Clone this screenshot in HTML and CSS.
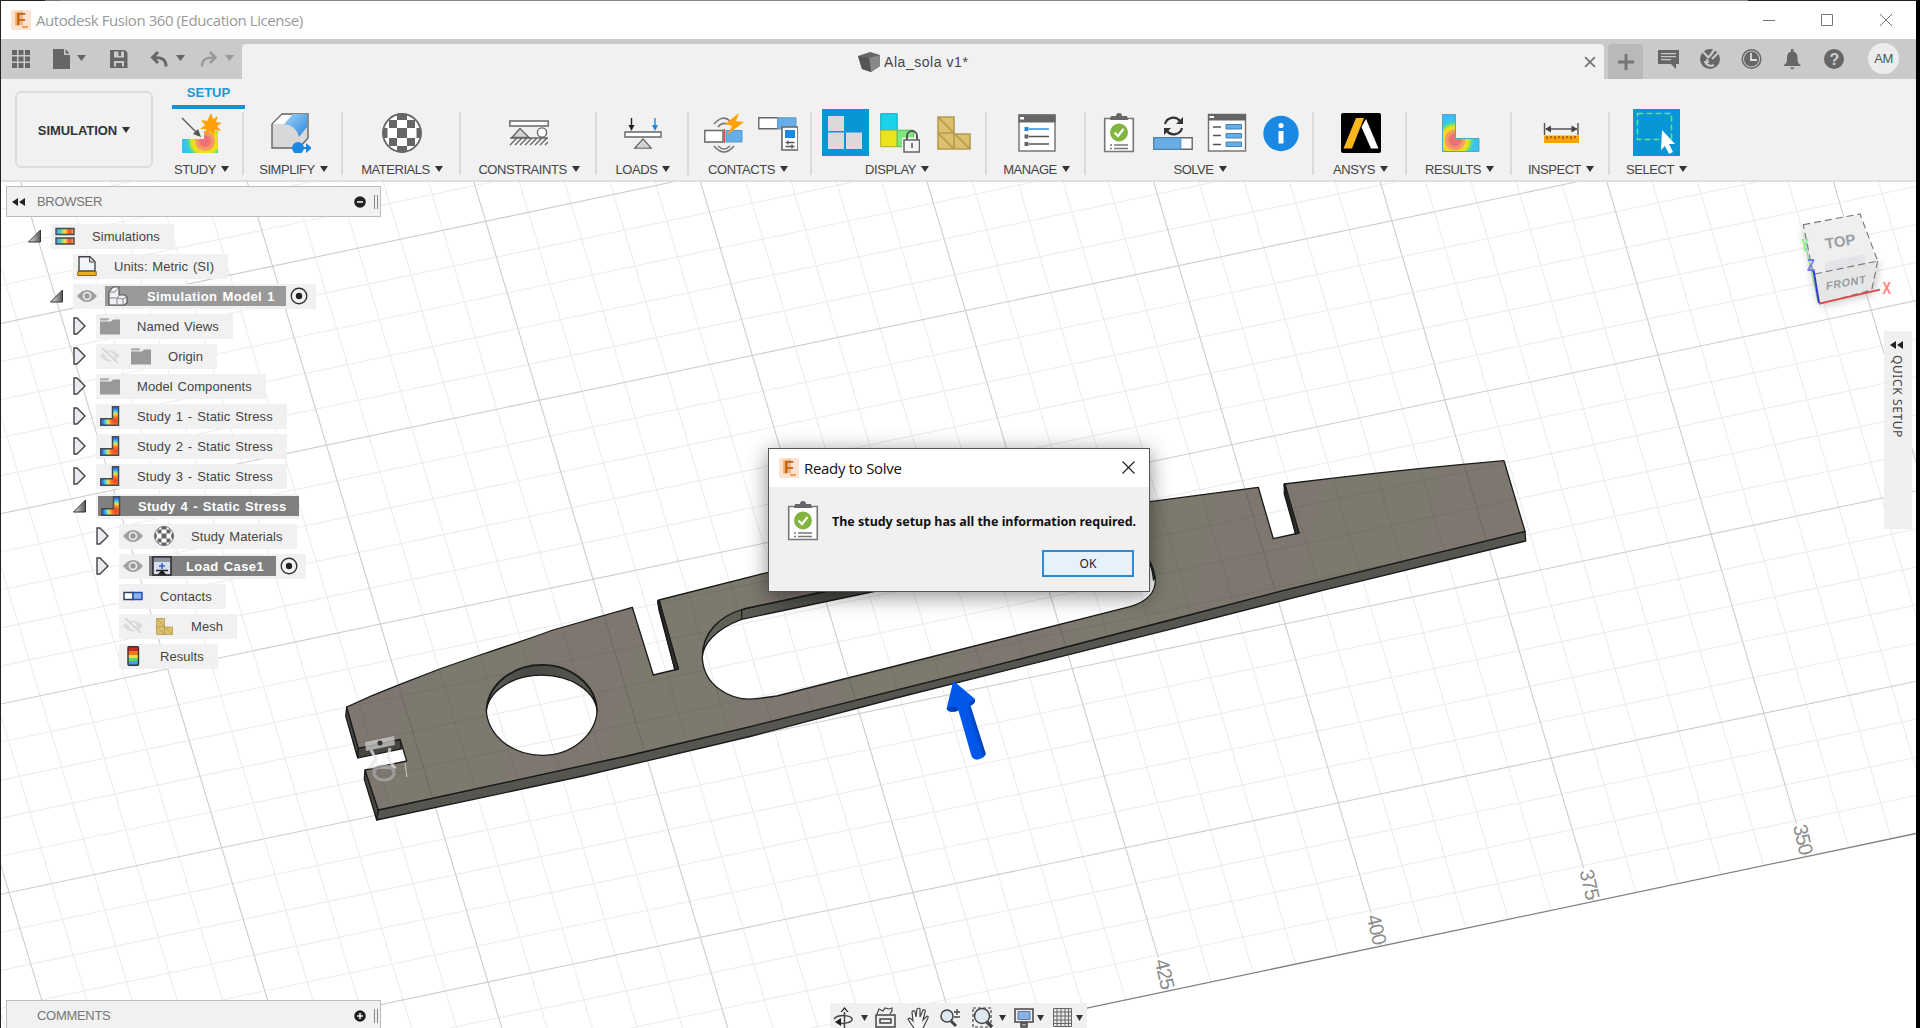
FILE: index.html
```html
<!DOCTYPE html>
<html lang="en">
<head>
<meta charset="utf-8">
<title>Autodesk Fusion 360 (Education License)</title>
<link rel="stylesheet" href="styles.css">
</head>
<body>
<svg class="defs" width="0" height="0" aria-hidden="true">
  <defs>
    <radialGradient id="heatDark" gradientUnits="userSpaceOnUse" cx="15" cy="15" r="14"><stop offset="0" stop-color="#f03a20"/><stop offset=".3" stop-color="#ff7a2a"/><stop offset=".5" stop-color="#ffe040"/><stop offset=".68" stop-color="#50d8e0"/><stop offset=".9" stop-color="#2f6ff0"/></radialGradient>
    <radialGradient id="heat" gradientUnits="userSpaceOnUse" cx="24" cy="28" r="25"><stop offset=".2" stop-color="#ec7175"/><stop offset=".24" stop-color="#f3905f"/><stop offset=".38" stop-color="#f6a35e"/><stop offset=".42" stop-color="#eee020"/><stop offset=".56" stop-color="#e4e01e"/><stop offset=".62" stop-color="#6ee070"/><stop offset=".74" stop-color="#35c9e4"/><stop offset="1" stop-color="#3fb8ff"/></radialGradient>
    <radialGradient id="heatL" gradientUnits="userSpaceOnUse" cx="15" cy="27" r="25"><stop offset=".22" stop-color="#ec7175"/><stop offset=".26" stop-color="#f3905f"/><stop offset=".4" stop-color="#f6a35e"/><stop offset=".44" stop-color="#eee020"/><stop offset=".56" stop-color="#e4e01e"/><stop offset=".64" stop-color="#6ee070"/><stop offset=".76" stop-color="#35c9e4"/><stop offset="1" stop-color="#3fb8ff"/></radialGradient>
    <linearGradient id="bar" ><stop offset="0" stop-color="#3aa0f0"/><stop offset=".3" stop-color="#60d8a0"/><stop offset=".5" stop-color="#ffe040"/><stop offset=".75" stop-color="#f04a30"/><stop offset="1" stop-color="#ffb040"/></linearGradient>
    <linearGradient id="blueFold" x2="1" y2="1"><stop offset="0" stop-color="#9fd2fb"/><stop offset="1" stop-color="#2b88d8"/></linearGradient>
    <linearGradient id="twist" x2="1"><stop offset="0" stop-color="#eee"/><stop offset="1" stop-color="#555"/></linearGradient>
    <clipPath id="ball"><circle cx="20" cy="20" r="19.5"/></clipPath>
    <symbol id="logo" viewBox="0 0 20 20"><rect width="20" height="20" rx="1" fill="#fbe3d0"/><path d="M4 2l8-1v14l-8 1z" fill="#f3b985"/><text x="5" y="14.500" font-family="Liberation Sans, sans-serif" font-weight="bold" font-size="16" fill="#c06414">F</text><path d="M11 17h6" stroke="#e9a05e" stroke-width="2"/></symbol>
    <symbol id="checker" viewBox="0 0 40 40"><circle cx="20" cy="20" r="19" fill="#fff"/><g clip-path="url(#ball)" fill="#666"><path d="M15 0h10v7H15zM15 15h10v10H15zM15 33h10v7H15zM0 15h5.500v10H0zM34.500 15H40v10h-5.500zM7 7h8v8H7zM25 7h8v8h-8zM7 25h8v8H7zM25 25h8v8h-8z"/></g><circle cx="20" cy="20" r="19" fill="none" stroke="#666" stroke-width="1.800"/></symbol>
    <symbol id="clip" viewBox="0 0 32 40"><path d="M1.700 5.500h28.600v33H1.700z" fill="#fff" stroke="#777" stroke-width="1.600"/><path d="M8 3h5a3 3 0 016 0h5l1 4H7z" fill="#666"/><circle cx="16" cy="19.500" r="9" fill="#82b540"/><path d="M11.500 19.500l3.500 3.500 5.500-7" fill="none" stroke="#fff" stroke-width="2.200"/><path d="M7 32h2M7 35.500h2M11 32h14M11 35.500h14" stroke="#777" stroke-width="1.600"/></symbol>
    <symbol id="eye" viewBox="0 0 20 14"><path d="M0 7Q10-5 20 7 10 19 0 7z" fill="#a0a0a0"/><circle cx="10" cy="7" r="4.300" fill="#eee"/><circle cx="10" cy="7" r="2.700" fill="#999"/></symbol>
    <symbol id="eyeoff" viewBox="0 0 20 16"><path d="M0 8Q10-3 20 8 10 19 0 8z" fill="#dcdcdc"/><circle cx="10" cy="8" r="3.500" fill="#f1f1f1"/><path d="M1 1l17 15" stroke="#f1f1f1" stroke-width="4"/><path d="M2 0l16 15" stroke="#cfcfcf" stroke-width="1.500"/></symbol>
    <symbol id="folder" viewBox="0 0 20 17"><path d="M0 4h11l2-2h7v15H0z" fill="#999"/><path d="M0 .8h9.500L8 3H0z" fill="#aaa"/></symbol>
    <symbol id="lshape" viewBox="0 0 20 20"><path d="M12.500.800h6v18.400H.8v-6.500h11.700z" fill="url(#heatDark)" stroke="#44484f" stroke-width="1.500"/></symbol>
    <symbol id="mesh" viewBox="0 0 34 34"><path d="M1 1h16v17h16v15H1zM1 17h16v16M1 1l16 16L33 33M1 17l16 16" fill="#dcc06e" stroke="#b39a50" stroke-width="1.600"/></symbol>
    <symbol id="open" viewBox="0 0 14 14"><path d="M13 1v12H1z" fill="url(#twist)" stroke="#333"/></symbol>
    <symbol id="shut" viewBox="0 0 13 18"><path d="M1 1h3l8 8-8 8H1z" fill="#eaeaf0" stroke="#444" stroke-width="1.400"/></symbol>
    <symbol id="radio" viewBox="0 0 18 18"><circle cx="9" cy="9" r="7.800" fill="#f4f4f4" stroke="#333" stroke-width="1.400"/><circle cx="9" cy="9" r="3.200" fill="#222"/></symbol>
    <symbol id="rewind" viewBox="0 0 13 8"><path d="M6 0v8L0 4zM13 0v8L7 4z" fill="#222"/></symbol>
  </defs>
</svg>

<div class="app">
  <header class="titlebar">
    <svg class="i20"><use href="#logo"/></svg>
    <span class="app-name">Autodesk Fusion 360 (Education License)</span>
    <svg class="winctl" viewBox="0 0 130 14" fill="none" stroke="#777"><path d="M1 7.500h12M59.500 1.500h11v11h-11zM118 1l12 12M130 1l-12 12"/></svg>
  </header>

  <div class="tabrow">
    <div class="quick">
      <svg viewBox="1 0 241 40" fill="#666">
        <path d="M12 11h5v5h-5zM18.500 11h5v5h-5zM25 11h5v5h-5zM12 17.500h5v5h-5zM18.500 17.500h5v5h-5zM25 17.500h5v5h-5zM12 24h5v5h-5zM18.500 24h5v5h-5zM25 24h5v5h-5z"/>
        <path d="M53 10h11v6h6v14H53zM65.500 10l4 4.500h-4zM77 16h9l-4.500 6zM176 16h9l-4.500 6z"/>
        <path fill-rule="evenodd" d="M110 11h15l2.500 2.500V29H110zM114 12.500v6h10v-6h-3v4.500h-2.500v-4.500zM114 22v5.500h2V24h6v3.500h2V22z"/>
        <path d="M118 25h3v4h-3z"/>
        <path d="M158 13l-5.500 5.500L158 24M153 18.500c8 0 13 1 13 9" fill="none" stroke="#666" stroke-width="3"/>
        <path d="M210 13l5.500 5.500L210 24M215 18.500c-8 0-13 1-13 9" fill="none" stroke="#999" stroke-width="2.500"/>
        <path fill="#999" d="M225 16h9l-4.500 6z"/>
      </svg>
    </div>
    <div class="doctab">
      <svg class="doc-icon" viewBox="0 0 22 20"><path d="M0 4L12 0l10 3v11l-9 6-9-3z" fill="#666"/><path d="M11 6l11-3v11l-9 6z" fill="#888"/><path d="M0 4l11 2 2 14-9-3z" fill="#555"/></svg>
      <span>Ala_sola v1*</span>
      <svg class="doc-close" viewBox="0 0 11 11"><path d="M1 1l9 9M10 1l-9 9" stroke="#777" stroke-width="1.700"/></svg>
    </div>
    <div class="newtab"><svg viewBox="0 0 16 16"><path d="M8 0v16M0 8h16" stroke="#777" stroke-width="3"/></svg></div>
    <svg class="tools" viewBox="0 0 200 40" fill="#666">
      <path fill-rule="evenodd" d="M3 11h21v14h-3v5l-5-5H3zM6 14v1.300h15V14zM6 17v1.300h15V17zM6 20v1.300h10V20z"/>
      <circle cx="55" cy="20" r="10"/><path d="M45 10l9 9M54 18l6-8M57 20l7-7M50 22a6 6 0 009 4M52 20l1 4" stroke="#cacaca" stroke-width="2.200" fill="none"/>
      <circle cx="96.500" cy="20" r="9.300" fill="none" stroke="#666" stroke-width="1.500"/><circle cx="96.500" cy="20" r="7.500"/><path d="M96 14v7h6" stroke="#ddd" stroke-width="1.800" fill="none"/>
      <path d="M129 26c3-2 3-4 3-8 0-3 2-5 4-5.500V10h2.500v2.500c2 .5 4 2.500 4 5.500 0 4 0 6 3 8v1h-16.500zM135 28.500h4.500a2.300 2.300 0 01-4.500 0z"/>
      <circle cx="179" cy="20" r="10"/><text x="174.500" y="26" font-family="Liberation Sans, sans-serif" font-weight="bold" font-size="16" fill="#d0d0d0">?</text>
    </svg>
    <div class="avatar">AM</div>
  </div>

  <nav class="ribbon">
    <button class="workspace">SIMULATION<i class="caret"></i></button>
    <div class="group g-study">
      <span class="active-tab">SETUP</span>
      <div class="icons"><svg class="i40" viewBox="0 0 40 40"><path d="M1 26h22V18h14v22H1z" fill="url(#heat)"/><path d="M1 5l16 16" stroke="#666" stroke-width="1.600"/><path d="M20 24l-8-3 5-5z" fill="#555"/><path d="M30 0l2 6 5-3-2 6 6 1-5 3 4 5-6-1-1 6-4-5-5 4 1-6-6 0 5-4-4-5 6 1z" fill="#ffa20a"/></svg></div>
      <span class="label">STUDY<i class="caret"></i></span>
    </div>
    <div class="group g-simplify"><div class="icons"><svg class="i40" viewBox="0 0 40 40"><path d="M1 11L11 1h26v24l-9 10H1z" fill="#d8d8d8" stroke="#666" stroke-width="1.400"/><path d="M2 11l9-9h12l-9 9z" fill="#fff"/><path d="M22 1h14v13L28 24Q26 13 13 11z" fill="url(#blueFold)"/><circle cx="27" cy="35" r="6" fill="#1b88e3"/><path d="M27 34h8v-4l6 5-6 5v-4h-8z" fill="#1b88e3"/></svg></div><span class="label">SIMPLIFY<i class="caret"></i></span></div>
    <div class="group g-materials"><div class="icons"><svg class="i40"><use href="#checker"/></svg></div><span class="label">MATERIALS<i class="caret"></i></span></div>
    <div class="group g-constraints"><div class="icons"><svg class="i40" viewBox="0 0 40 40"><g stroke="#666" stroke-width="1.400"><path d="M.800 8h38.400v5H.8z" fill="#fff"/><path d="M3 24.500l8-9 9 9z" fill="#d5d5d5"/><circle cx="33" cy="19.500" r="4.600" fill="#fff"/><path d="M1 25h38M1 32l7-7M6 32l7-7M11 32l7-7M16 32l7-7M21 32l7-7M26 32l7-7M31 32l7-7M36 32l3-3" fill="none"/></g></svg></div><span class="label">CONSTRAINTS<i class="caret"></i></span></div>
    <div class="group g-loads"><div class="icons"><svg class="i40" viewBox="0 0 40 40"><path d="M2 19h36v5H2zM12 35l8-9 8 9z" fill="#fff" stroke="#666" stroke-width="1.400"/><path d="M14 34.500l6-7 6 7z" fill="#d0d0d0"/><path d="M8.500 5v8" stroke="#222" stroke-width="1.400"/><path d="M5.500 12h6l-3 6z" fill="#222"/><path d="M32 5v8" stroke="#1b88e3" stroke-width="1.400"/><path d="M29 12h6l-3 6z" fill="#1b88e3"/></svg></div><span class="label">LOADS<i class="caret"></i></span></div>
    <div class="group g-contacts"><div class="icons">
      <svg class="i40" viewBox="0 0 40 40"><path d="M.800 17.500H19v11.500H.8z" fill="#fff" stroke="#666" stroke-width="1.400"/><path d="M22 17.500h16V29H22z" fill="#68aee6" stroke="#5a96c8"/><path d="M20.300 16v14" stroke="#e34b4b" stroke-width="1.600"/><path d="M10 11q9-10 16-3M14 14q4-5 9-3M10 33q10 12 20 0M14 33q6 6 12 0" fill="none" stroke="#777" stroke-width="1.600"/><path d="M35 0L21 11l7 2-5 9 17-13-8-1z" fill="#ffa20a"/></svg>
      <svg class="i40" viewBox="0 0 40 40"><path d="M.800 4.800h19v11H.8z" fill="#fff" stroke="#666" stroke-width="1.400"/><path d="M19.500 4.800H38v11H19.500z" fill="#68aee6" stroke="#5a96c8"/><path d="M24 14h16v23H24z" fill="#fff" stroke="#666" stroke-width="1.600"/><path d="M27 17h10v8H27z" fill="#1b88e3"/><path d="M27.500 29.500h9M27.500 33.500h9M30 27.500v4M34 31.500v4" stroke="#555" stroke-width="1.300"/></svg>
    </div><span class="label">CONTACTS<i class="caret"></i></span></div>
    <div class="group g-display"><div class="icons">
      <span class="hot"><svg viewBox="0 0 47 47"><path d="M6 7h16v15H6zM6 23.500h16V40H6zM24 23.500h16V40H24z" fill="#dadada"/></svg></span>
      <svg class="i40" viewBox="0 0 40 40"><path d="M.700.700h16.500v16.500H.7z" fill="#1bd3e8" stroke="#17a7bf"/><path d="M.700 17.200h16.500v16.500H.7z" fill="#ebe31c" stroke="#b5ae28"/><path d="M17.200 17.200h16.500v16.500H17.200z" fill="#7be87d" stroke="#59bb5c"/><path d="M24 26.500h15.500v13H24z" fill="#eee" stroke="#f1f1f1" stroke-width="4"/><path d="M27 27v-4a5 5 0 0110 0v4" fill="none" stroke="#555" stroke-width="2"/><path d="M24 27h15.500v12H24z" fill="#f4f4f4" stroke="#666" stroke-width="1.500"/><path d="M32 30v5" stroke="#555" stroke-width="1.500"/></svg>
      <svg class="i34"><use href="#mesh"/></svg>
    </div><span class="label">DISPLAY<i class="caret"></i></span></div>
    <div class="group g-manage"><div class="icons"><svg class="i40" viewBox="0 0 40 40"><path d="M2 2h36v36H2z" fill="#fff" stroke="#777" stroke-width="1.500"/><path d="M1.500 1.500h37v8h-37z" fill="#666"/><path d="M3 4h4v2.500H3z" fill="#fff"/><path d="M12 16h20" stroke="#1b88e3" stroke-width="1.400"/><path d="M12 23.500h20M12 31h20" stroke="#555" stroke-width="1.400"/><path d="M7.500 14h4v4h-4z" fill="#1b88e3"/><path d="M7.500 21.500h4v4h-4zM7.500 29h4v4h-4z" fill="#666"/></svg></div><span class="label">MANAGE<i class="caret"></i></span></div>
    <div class="group g-solve"><div class="icons">
      <svg class="i40"><use href="#clip"/></svg>
      <svg class="i40" viewBox="0 0 40 40"><path d="M.800 24.800h38.400v11.400H.8z" fill="#fff" stroke="#666" stroke-width="1.400"/><path d="M.800 24.800h27v11.400h-27z" fill="#68aee6" stroke="#4a86b8"/><path d="M12 11a8.500 8.500 0 0115-3M29 15a8.500 8.500 0 01-15 3" fill="none" stroke="#333" stroke-width="2.200"/><path d="M30 4v7h-7zM11 22v-7h7z" fill="#333"/></svg>
      <svg class="i40" viewBox="0 0 40 40"><path d="M1.500 1.500h37v36.500h-37z" fill="#fff" stroke="#777" stroke-width="1.500"/><path d="M1 1h38v6.500H1z" fill="#666"/><path d="M2.500 3h4.500v2H2.500z" fill="#fff"/><path d="M6 14h8M6 22.500h8M6 31.500h8" stroke="#555" stroke-width="1.300"/><path d="M19 11.500h15.500v4.500H19zM19 20.500h15.500V25H19zM19 29h15.500v4.500H19z" fill="#68aee6" stroke="#4682b4"/></svg>
      <svg class="i40" viewBox="0 0 40 40"><circle cx="20" cy="20.500" r="17.700" fill="#1b88e3"/><circle cx="20" cy="12.500" r="2.600" fill="#fff"/><path d="M17.500 18h5v12.500h-5z" fill="#fff"/></svg>
    </div><span class="label">SOLVE<i class="caret"></i></span></div>
    <div class="group g-ansys"><div class="icons"><svg class="i40" viewBox="0 0 40 40"><rect width="40" height="40" rx="2"/><path d="M15 5h8L11 35.500H2.500z" fill="#fdb71a"/><path d="M25 6l12.500 29.500H30L20.500 14z" fill="#fff"/></svg></div><span class="label">ANSYS<i class="caret"></i></span></div>
    <div class="group g-results"><div class="icons"><svg class="i40" viewBox="0 0 40 40"><path d="M2.500 1.500H15.500V25.500H39V38.500H2.500z" fill="url(#heatL)" stroke="#57a9b5"/></svg></div><span class="label">RESULTS<i class="caret"></i></span></div>
    <div class="group g-inspect"><div class="icons"><svg class="i40" viewBox="0 0 40 40"><path d="M3.500 10v12M37 10v12M5 16h31" stroke="#555" stroke-width="1.400"/><path d="M4 16l6-3.500v7zM36.500 16l-6-3.500v7z" fill="#444"/><path d="M3 22.500h35V30H3z" fill="#ffa20a"/><path d="M6 23v3.500M10 23v2.500M14 23v3.500M18 23v2.500M22 23v3.500M26 23v2.500M30 23v3.500M34 23v2.500" stroke="#7a5510" stroke-width="1.200"/></svg></div><span class="label">INSPECT<i class="caret"></i></span></div>
    <div class="group g-select"><div class="icons"><span class="hot"><svg viewBox="0 0 47 47"><path d="M4.500 4.500h34v26h-34z" fill="none" stroke="#5fe08a" stroke-width="1.600" stroke-dasharray="6 3"/><path d="M29 21l13 14h-6l4 8-4 2-4-8-4 4z" fill="#fff"/></svg></span></div><span class="label">SELECT<i class="caret"></i></span></div>
  </nav>

  <main class="viewport">
    <svg class="scene" viewBox="1 182 1915 846">
      <defs>
        <linearGradient id="face" gradientUnits="userSpaceOnUse" x1="1260" y1="540" x2="1362" y2="565" spreadMethod="reflect"><stop offset="0" stop-color="#7e7770"/><stop offset=".35" stop-color="#7e7770"/><stop offset=".75" stop-color="#7b7a6c"/><stop offset="1" stop-color="#7b7a6c"/></linearGradient>
        <linearGradient id="wall" x1="0" x2="1"><stop offset="0" stop-color="#64645c"/><stop offset=".35" stop-color="#484844"/><stop offset="1" stop-color="#5c5b54"/></linearGradient>
        <linearGradient id="shaft" gradientUnits="userSpaceOnUse" x1="958" y1="735" x2="979" y2="729"><stop offset="0" stop-color="#0040b8"/><stop offset=".35" stop-color="#0059f0"/><stop offset=".75" stop-color="#0055e6"/><stop offset="1" stop-color="#003da8"/></linearGradient>
        <clipPath id="faceClip"><path clip-rule="evenodd" d="M346.700 707Q372 695 400 684.300 440 668 480 655T553 630L632.300 607.300 653.300 675 678.300 669 659 600 760 574.300Q950 530 1150 501.700L1258.300 487.300 1273.300 538.700 1299 533 1284.300 484Q1380 472 1463 464.300L1504 460.700 1525 531.300 1287.700 589.300 1170 620 990 666.700 750 726.700 626.700 756 378.300 810 365 770 406.700 761 400 739.300 358.300 748.300zM486.300 710a55.500 47.300 0 00110.900 0 55.500 47.300 0 00-110.900 0zM743.300 609C720 616 702.300 632 702.300 656.700 703 685 730 702 757 698.700L776.700 696 1130 606.700C1149 601 1157 590 1155 576.700 1152 560 1140 540 1115 537 1090 532 900 575 743.300 609z"/></clipPath>
        <filter id="soft" x="-30%" y="-30%" width="160%" height="160%"><feGaussianBlur stdDeviation="5"/></filter>
      </defs>
      <g id="grid"></g>
      <g class="ruler"><text transform="translate(1163 974) rotate(77)">425</text><text transform="translate(1375 929.500) rotate(77)">400</text><text transform="translate(1588 884.500) rotate(77)">375</text><text transform="translate(1801.500 839.500) rotate(77)">350</text></g>

      <g stroke="#1a1a1a" stroke-width="1.300" stroke-linejoin="round">
        <path d="M378.300 810L626.700 756 750 726.700 990 666.700 1170 620 1287.700 589.300 1525 531.300 1525.700 541 1326.700 589.300 1170 629.300 900 697 750 736.500 583 776 376.700 820z" fill="#56554f"/>
        <path d="M365 770l-.7 9 12.400 41 1.600-10zM346.700 707l-1 9 12 42 .6-9.700zM358.300 748.300L400 739.300l1.500 9.500-43.500 9z" fill="#474640"/>
        <path d="M486.300 712A55.500 49 0 01597.200 712 55.500 38.500 0 00486.300 712z" fill="url(#wall)"/>
        <path d="M702.300 656.700C702.300 632 720 616 743.300 609L1100 534v10L741.700 619.300C715 629 703 645 702.300 656.700z" fill="url(#wall)"/>
        <path d="M1148 551q6 12 7 26l-1.500 3q-1-12-6-22z" fill="#44443f"/>
        <path d="M657.600 601l1.400 9L675 670l3.300-1zM1284.300 484l0 10L1295.700 534l3.300-1z" fill="#34342f"/>
        <path fill="url(#face)" fill-rule="evenodd" d="M346.700 707Q372 695 400 684.300 440 668 480 655T553 630L632.300 607.300 653.300 675 678.300 669 659 600 760 574.300Q950 530 1150 501.700L1258.300 487.300 1273.300 538.700 1299 533 1284.300 484Q1380 472 1463 464.300L1504 460.700 1525 531.300 1287.700 589.300 1170 620 990 666.700 750 726.700 626.700 756 378.300 810 365 770 406.700 761 400 739.300 358.300 748.300zM486.300 710a55.500 47.300 0 00110.900 0 55.500 47.300 0 00-110.900 0zM743.300 609C720 616 702.300 632 702.300 656.700 703 685 730 702 757 698.700L776.700 696 1130 606.700C1149 601 1157 590 1155 576.700 1152 560 1140 540 1115 537 1090 532 900 575 743.300 609z"/>
        <path d="M741.700 609v11" fill="none"/>
        <path d="M657.600 601L675 670l3.300-1L659 600zM1284 485L1295.700 534l3.300-1L1285 484z" fill="#34342f"/>
      </g>
      <g id="faceGrid" clip-path="url(#faceClip)"></g>
      <g fill="none" stroke="#e6e6e6" opacity=".75"><path d="M365 742l29-6 1 9-29 6z" fill="#ccc" stroke="none"/><path d="M371 750l5 9-6 8 24 0-6-9 2-10" stroke-width="3"/><ellipse cx="384" cy="773" rx="10" ry="7" stroke="#aaa" stroke-width="3"/><path d="M401 752l3 8M405 763l2 14" stroke-width="1"/></g>
      <circle cx="380" cy="743" r="2.500" fill="#333"/>

      <path d="M958 709L971.700 756.700Q975 761.500 981 758.500 986 756 985.700 753.300L970 704z" fill="url(#shaft)"/>
      <path d="M953.300 680.700L946.700 708.300Q948 714 957 711L970 706Q976 703 975 699z" fill="#0058ea"/>
      <path d="M946.700 708q1 5 11 3l-1-4q-7 0-10 1zM970 706q6-3 5-6l-6 2z" fill="#0040b4"/>

      <g>
        <path d="M1803 228l17 78 54-13 4-30z" fill="#999" opacity=".6" filter="url(#soft)"/>
        <path d="M1813.300 274.300L1877.700 261 1871.700 290 1819 303.700z" fill="#e6e6e6"/>
        <path d="M1803.300 224.700L1860 214l17.700 47-64.400 13.300z" fill="#efefef"/>
        <path d="M1825 262l40-8v11l-40 9z" fill="#e2e4e8"/>
        <path d="M1803.300 224.700L1860 214l17.700 47-64.400 13.300zM1877.700 261l-6 29-52 14" fill="none" stroke="#777" stroke-dasharray="7 4" stroke-width="1.100"/>
        <text class="cube-top" transform="translate(1826 249) rotate(-9)">TOP</text>
        <text class="cube-front" transform="translate(1826 290) rotate(-10) skewX(-12)">FRONT</text>
        <path d="M1806 248l6 26 6 28" stroke="#6de07c" fill="none"/><path d="M1813.500 270l5.500 33" stroke="#3838c8" stroke-width="2"/><path d="M1819 303.700l61-14" stroke="#e04848" stroke-width="1.800"/>
        <text class="axis" transform="translate(1882.500 293.500) scale(.8 1)" fill="#ff8080">X</text><text class="axis" transform="translate(1801 251) scale(.7 1)" fill="#86f286">Y</text><text class="axis" transform="translate(1807 271) scale(.8 1)" fill="#7878f0">Z</text>
      </g>
    </svg>

    <aside class="browser">
      <div class="panel-head"><svg class="rew"><use href="#rewind"/></svg><span>BROWSER</span><svg class="dot" viewBox="0 0 12 12"><circle cx="6" cy="6" r="5.800" fill="#222"/><path d="M3 6h6" stroke="#eee" stroke-width="1.600"/></svg><i class="grip"></i></div>
      <ul class="tree">
        <li class="d0"><svg class="tw"><use href="#open"/></svg><div class="pill"><svg class="ic" viewBox="0 0 20 20"><path d="M1 2.500h18v6H1zM1 12h18v6H1z" fill="url(#bar)" stroke="#44484f" stroke-width="1.400"/></svg><span>Simulations</span></div></li>
        <li class="d1 leaf"><div class="pill"><svg class="ic" viewBox="0 0 20 20"><path d="M2 .8h11l5 5V15H2z" fill="#f2f4fa" stroke="#444" stroke-width="1.400"/><path d="M12.500 1v5h5" fill="#ccc" stroke="#555"/><path d="M.8 15.500h18.400v4H.8z" fill="#e8b020" stroke="#8a6410"/></svg><span>Units: Metric (SI)</span></div></li>
        <li class="d1"><svg class="tw"><use href="#open"/></svg><div class="pill has-radio"><svg class="eye"><use href="#eye"/></svg><b class="sel mid"><svg class="ic" viewBox="0 0 20 20"><path d="M1 6l4-5h6v8h6l2 2v6l-3 2H1z" fill="#eef0f6" stroke="#555" stroke-width="1.200"/><path d="M1 6h6l4-5M1 12h8v7M9 12l3-3M9 12l6 1 4-2M15 13v6" fill="none" stroke="#888"/></svg><span>Simulation Model 1</span></b><svg class="radio"><use href="#radio"/></svg></div></li>
        <li class="d2"><svg class="tw shut"><use href="#shut"/></svg><div class="pill"><svg class="ic"><use href="#folder"/></svg><span>Named Views</span></div></li>
        <li class="d2"><svg class="tw shut"><use href="#shut"/></svg><div class="pill"><svg class="eye off"><use href="#eyeoff"/></svg><svg class="ic"><use href="#folder"/></svg><span>Origin</span></div></li>
        <li class="d2"><svg class="tw shut"><use href="#shut"/></svg><div class="pill"><svg class="ic"><use href="#folder"/></svg><span>Model Components</span></div></li>
        <li class="d2"><svg class="tw shut"><use href="#shut"/></svg><div class="pill study"><svg class="ic"><use href="#lshape"/></svg><span>Study 1 - Static Stress</span></div></li>
        <li class="d2"><svg class="tw shut"><use href="#shut"/></svg><div class="pill study"><svg class="ic"><use href="#lshape"/></svg><span>Study 2 - Static Stress</span></div></li>
        <li class="d2"><svg class="tw shut"><use href="#shut"/></svg><div class="pill study"><svg class="ic"><use href="#lshape"/></svg><span>Study 3 - Static Stress</span></div></li>
        <li class="d2"><svg class="tw"><use href="#open"/></svg><div class="pill whole"><b class="sel"><svg class="ic"><use href="#lshape"/></svg><span>Study 4 - Static Stress</span></b></div></li>
        <li class="d3"><svg class="tw shut"><use href="#shut"/></svg><div class="pill"><svg class="eye"><use href="#eye"/></svg><svg class="ic"><use href="#checker"/></svg><span>Study Materials</span></div></li>
        <li class="d3"><svg class="tw shut"><use href="#shut"/></svg><div class="pill has-radio"><svg class="eye"><use href="#eye"/></svg><b class="sel tight"><svg class="ic" viewBox="0 0 20 20"><path d="M1 1h18v18H1z" fill="#d9dfee" stroke="#222" stroke-width="1.500"/><path d="M2 2h16v4H2z" fill="#8d929e"/><path d="M10 7v6M7 10h6" stroke="#2c5fd0" stroke-width="1.500"/><path d="M4 14.500h12M7 18l3-3 3 3z" stroke="#222" stroke-width="1.400"/></svg><span>Load Case1</span></b><svg class="radio"><use href="#radio"/></svg></div></li>
        <li class="d3 leaf"><div class="pill"><svg class="ic" viewBox="0 0 20 20"><path d="M1 6.500h9v7H1z" fill="#fff" stroke="#345" stroke-width="1.500"/><path d="M10 6.500h9v7h-9z" fill="#8fb3ee" stroke="#2450b0" stroke-width="1.500"/></svg><span>Contacts</span></div></li>
        <li class="d3 leaf"><div class="pill"><svg class="eye off"><use href="#eyeoff"/></svg><svg class="ic meshy"><use href="#mesh"/></svg><span>Mesh</span></div></li>
        <li class="d3 leaf"><div class="pill"><svg class="ic" viewBox="0 0 20 20"><path d="M5 1h10v4.500H5z" fill="#c82a2a"/><path d="M5 5h10v4H5z" fill="#e87a20"/><path d="M5 9h10v3H5z" fill="#ffd83a"/><path d="M5 12h10v3H5z" fill="#5fd85a"/><path d="M5 15h10v4H5z" fill="#35a8f0"/><rect x="5" y=".8" width="10.500" height="18.400" rx="1" fill="none" stroke="#333" stroke-width="1.400"/></svg><span>Results</span></div></li>
      </ul>
    </aside>

    <section class="quicksetup"><svg class="rew"><use href="#rewind"/></svg><span>QUICK SETUP</span></section>

    <section class="comments panel-head"><span>COMMENTS</span><svg class="dot" viewBox="0 0 12 12"><circle cx="6" cy="6" r="5.800" fill="#222"/><path d="M3 6h6M6 3v6" stroke="#eee" stroke-width="1.600"/></svg><i class="grip"></i></section>

    <section class="navbar">
      <svg viewBox="0 0 258 25" fill="none" stroke="#444" stroke-width="1.500">
        <path d="M14.500 8v17M4 16c4-5 17-4 18 0s-10 5-14 4"/><path d="M14.500 4l4 5h-8zM5 19l6-4v8z" fill="#222" stroke="none"/><path d="M14.500 6l2.500 3h-5z" fill="#fff" stroke="none"/>
        <path d="M46 12h19v12H46zM50 16h11v4H50z"/><path d="M47 11l2-5 4 2 2-3 4 1 3-1v3l-2 3" stroke-width="1.200"/>
        <path d="M84 25q-5-7-6-9c2-2 3 0 5 2L82 9c1-2 3-1 3 0l1 5 1-8c1-1 3-1 3 0v8l3-7c1-1 3 0 2 2l-2 8 4-4c2 0 1 2 0 4l-4 8" fill="#f6f6f6" stroke-width="1.200"/>
        <circle cx="117" cy="13" r="6" fill="#dbe8f2"/><path d="M121 18l5 5" stroke-width="3"/><path d="M124 9h6M127 6v6M124 14h6" stroke-width="1.300"/>
        <path d="M143 5h18v19h-18z" stroke-dasharray="3 2" stroke-width="1.200"/><circle cx="152" cy="13" r="7.500" fill="#dceaf0"/><path d="M157 19l5 5" stroke-width="3.500"/>
        <path d="M185 6h18v13h-18z" fill="#eee"/><path d="M188 8.500h12v8h-12z" fill="#8ab0e8" stroke="#5577aa" stroke-width="1"/><path d="M191 20h6v4h-6z" fill="#999"/>
        <path d="M223.500 5.500h18v18h-18zM227 5v19M231 5v19M235 5v19M238.500 5v19M223 9h19M223 13h19M223 17h19M223 20.500h19" stroke-width="1" fill="#e8e8e8" stroke="#666"/>
        <path d="M31 12h7l-3.500 6zM169 12h7l-3.500 6zM207 12h7l-3.500 6zM246 12h7l-3.500 6z" fill="#333" stroke="none"/>
      </svg>
    </section>

    <section class="dialog">
      <div class="dialog-head"><svg class="i20"><use href="#logo"/></svg><span>Ready to Solve</span><svg class="dialog-x" viewBox="0 0 13 13"><path d="M.500.500l12 12M12.500.500l-12 12" stroke="#222" stroke-width="1.200"/></svg></div>
      <div class="dialog-body"><svg class="big-clip"><use href="#clip"/></svg><p>The study setup has all the information required.</p></div>
      <button class="ok">OK</button>
    </section>
  </main>
</div>
<script src="grid.js"></script>
</body>
</html>
```
FILE: styles.css
```css
* { box-sizing: border-box; }
body { margin: 0; background: #000; font: 13px "Liberation Sans", Arial, sans-serif; color: #444; overflow: hidden; }
svg { display: block; flex: none; }
button { font: inherit; }
.defs { position: absolute; }
.app { width: 1916px; height: 1028px; display: grid; grid-template-rows: 39px 40px 103px 846px; border-left: 1px solid #222; background: #fff; }
.i20 { width: 20px; height: 20px; }
.i40 { width: 40px; height: 40px; }
.i34 { width: 34px; height: 34px; }

.titlebar { display: flex; align-items: center; padding: 0 24px 0 10px; background: linear-gradient(90deg, #222 44px, #777 44px 60px, #8a8a8a 60px 1747px, #222 1747px) top / 100% 1px no-repeat #fff; }
.app-name { margin-left: 5px; font: 15px/20px "Open Sans", sans-serif; letter-spacing: -.43px; color: #999; white-space: nowrap; }
.winctl { width: 130px; height: 14px; margin-left: auto; }

.tabrow { display: flex; align-items: flex-end; background: #cacaca; }
.quick { width: 241px; height: 40px; }
.quick svg { width: 241px; height: 40px; }
.doctab { width: 1362px; height: 35px; display: flex; align-items: center; padding: 1px 8px 0 616px; background: #f1f1f1; border-radius: 4px 4px 0 0; font-size: 14px; letter-spacing: .55px; }
.doc-icon { width: 22px; height: 20px; margin-right: 4px; }
.doc-close { width: 12px; height: 12px; margin: 0 0 0 auto; }
.newtab { width: 35px; height: 35px; margin-left: 4px; display: grid; place-items: center; background: #b9b9b9; border-radius: 4px 4px 0 0; }
.newtab svg { width: 16px; height: 16px; }
.tools { width: 200px; height: 40px; margin-left: 12px; }
.avatar { width: 31px; height: 31px; margin: 0 0 5px 13px; border-radius: 50%; background: #ececec; display: grid; place-items: center; font-size: 13px; letter-spacing: -.5px; color: #555; }

.ribbon { display: flex; align-items: stretch; background: #f1f1f1; border-bottom: 2px solid #dedede; }
.workspace { width: 138px; height: 77px; margin: 12px 20px 0 14px; border: 2px solid #dcdcdc; border-radius: 6px; background: #f1f1f1; font-weight: bold; letter-spacing: -.05px; color: #333; white-space: nowrap; padding: 2px 0 0; }
.caret { display: inline-block; border: 4px solid transparent; border-top: 6px solid #333; border-bottom: 0; margin-left: 5px; vertical-align: 2px; }
.group { display: flex; flex-direction: column; justify-content: flex-end; align-items: center; background: linear-gradient(#dadada, #dadada) right 0 top 33px / 2px 63px no-repeat; }
.icons { height: 49px; display: flex; align-items: center; justify-content: center; }
.icons > * + * { margin-left: 14px; }
.label { height: 24px; line-height: 25px; letter-spacing: -.45px; color: #444; white-space: nowrap; margin-bottom: -1px; }
.hot { width: 47px; height: 47px; background: #0896d7; }
.hot svg { width: 47px; height: 47px; }
.active-tab { width: 73px; height: 30px; text-align: center; font-weight: bold; line-height: 27px; color: #1a98d8; border-bottom: 4px solid #0c96d8; margin-bottom: -1px; }
.g-study { width: 71px; }
.g-study .icons { margin-right: 15px; }
.g-study .label { margin-right: 14px; }
.g-simplify { width: 99px; }
.g-simplify .icons { margin-right: 5px; }
.g-materials { width: 118px; }
.g-constraints { width: 136px; }
.g-loads { width: 92px; }
.g-contacts { width: 123px; }
.g-contacts .label { margin-right: 5px; }
.g-display { width: 175px; }
.g-display .icons { margin-right: 6px; }
.g-display .label { margin-right: 5px; }
.g-display .hot { margin-right: -3px; }
.g-display .i34 { margin-left: 17px; }
.g-manage { width: 99px; }
.g-solve { width: 228px; }
.g-ansys { width: 93px; }
.g-results { width: 105px; }
.g-inspect { width: 98px; }
.g-select { width: 96px; background: none; }
.g-select .icons, .g-select .label { margin-right: 3px; }

.viewport { display: grid; overflow: hidden; }
.viewport > * { grid-area: 1 / 1; }
.scene { width: 1915px; height: 846px; }
.minor { stroke: #ededed; stroke-width: 1.1; }
.major { stroke: #cdcdcd; stroke-width: 1.1; }
.edge { stroke: #828282; stroke-width: 1.3; }
.on-face { stroke: #55544c; stroke-width: 1; opacity: .18; }
.on-face.major { opacity: .4; }
.ruler { font: 20px "Liberation Sans", sans-serif; fill: #8c8c8c; letter-spacing: -1.2px; }
.ruler text { dominant-baseline: middle; text-anchor: middle; }
.cube-top { font: bold 15px "Liberation Sans", sans-serif; fill: #9a9ea3; }
.cube-front { font: bold 11px "Liberation Sans", sans-serif; letter-spacing: .6px; fill: #999da2; }
.axis { font: bold 16px "Liberation Sans", sans-serif; }

.browser { width: 375px; margin: 4px 0 0 5px; align-self: start; }
.panel-head { display: flex; align-items: center; height: 31px; background: #f1f1f1; border: 1px solid #bdbdbd; color: #777; letter-spacing: -.3px; }
.panel-head span { margin-left: 12px; }
.rew { width: 13px; height: 8px; margin-left: 5px; }
.dot { width: 12px; height: 12px; margin-left: auto; }
.grip { width: 4px; height: 14px; margin: 0 2px 0 8px; border: solid #888; border-width: 0 1px; }
.tree { list-style: none; margin: 4px 0 0; padding: 0; }
.tree li { display: flex; align-items: center; height: 30px; }
.d0 { padding-left: 21px; }
.d1 { padding-left: 43px; }
.d2 { padding-left: 66px; }
.d3 { padding-left: 89px; }
.d1.leaf { padding-left: 67px; }
.d3.leaf { padding-left: 113px; }
.tw { width: 15px; height: 14px; margin-right: 9px; }
.tw.shut { width: 13px; height: 18px; margin: 0 10px 0 1px; }
.pill { display: flex; align-items: center; height: 25px; padding: 0 14px 0 4px; background: rgba(240, 240, 240, .96); color: #444; white-space: nowrap; word-spacing: 1.1px; letter-spacing: .06px; }
.pill.study { letter-spacing: .12px; }
.ic { width: 20px; height: 20px; }
.ic + span { margin-left: 17px; }
.meshy { width: 17px; height: 17px; margin: 0 1px 0 2px; }
.eye { width: 20px; height: 14px; margin-right: 11px; }
.eye.off { height: 16px; }
.pill.has-radio { padding: 0 8px 0 4px; }
.sel { display: flex; align-items: center; height: 20px; padding: 0 11px 0 3px; margin-left: -3px; background: #999; color: #fff; letter-spacing: .4px; }
.sel.mid .ic + span { margin-left: 19px; }
.sel.tight { background: #808080; margin-left: -5px; padding-right: 12px; }
.sel.tight .ic + span { margin-left: 14px; }
.pill.whole { padding: 0; }
.whole .sel { margin-left: 2px; background: #808080; padding-right: 12px; letter-spacing: .3px; }
.radio { width: 18px; height: 18px; margin-left: 4px; }

.quicksetup { width: 28px; height: 198px; margin: 149px 4px 0 0; justify-self: end; background: #f0f0f0; }
.quicksetup .rew { margin: 10px 0 6px 6px; }
.quicksetup span { writing-mode: vertical-rl; font: 12px/26px "Noto Sans", sans-serif; letter-spacing: .6px; }
.comments { width: 375px; margin: 0 0 -3px 5px; align-self: end; }
.comments span { margin-left: 30px; }
.navbar { width: 257px; height: 25px; margin-left: 829px; align-self: end; background: #f0f0f0; }
.navbar svg { width: 258px; height: 25px; }

.dialog { width: 382px; height: 144px; margin: 266px 0 0 767px; background: #f0f0f0; border: 1px solid #555; box-shadow: 0 4px 20px rgba(0, 0, 0, .45); display: flex; flex-direction: column; }
.dialog-head { display: flex; align-items: center; height: 38px; padding: 0 14px 1px 10px; background: #fff; color: #111; font: 15px "Open Sans", sans-serif; letter-spacing: -.3px; }
.dialog-head span { margin-left: 5px; }
.dialog-x { width: 13px; height: 13px; margin-left: auto; }
.dialog-body { display: flex; align-items: center; height: 63px; padding: 5px 0 0 18px; }
.big-clip { width: 32px; height: 40px; }
.dialog-body p { margin: 0 0 0 13px; font: bold 12.5px "Noto Sans", sans-serif; letter-spacing: -.02px; color: #111; white-space: nowrap; }
.ok { width: 92px; height: 27px; margin: 0 15px 0 auto; padding: 0; border: 2px solid #2a8ad8; background: #e5f1fb; color: #222; font: 12px "Noto Sans", sans-serif; }
```
FILE: grid.js
```js
// Ground plane: sloping rows and columns, every fifth line heavier.
const NS = "http://www.w3.org/2000/svg";
const SLOPE = -0.2106;
const EDGE = 1237;
const TOP = 181.7;

function line(parent, cls, x1, y1, x2, y2) {
  const el = document.createElementNS(NS, "line");
  el.setAttribute("class", cls);
  el.setAttribute("x1", x1);
  el.setAttribute("y1", y1);
  el.setAttribute("x2", x2);
  el.setAttribute("y2", y2);
  parent.appendChild(el);
}

function drawGrid(parent, extra) {
  for (const heavy of [false, true]) {
    const cls = (heavy ? "major" : "minor") + extra;
    for (let v = 1; v < 40; v++) {
      if ((v % 5 === 4) !== heavy) continue;
      const y = EDGE - 38.06 * v;
      line(parent, cls, 0, y, 1916, y + 1916 * SLOPE);
    }
    for (let u = -65; u < 30; u++) {
      if ((u % 5 === 0) !== heavy) continue;
      const k = u / 5;
      const x = 927 + 226.6 * k;
      const s = 0.2982 - 0.0009 * k;
      const y = (EDGE + SLOPE * (x - s * TOP)) / (1 - SLOPE * s);
      // Heavy columns break off above their ruler label and resume as a tick.
      const end = heavy && y < 1028 ? y - 33 : y;
      line(parent, cls, x, TOP, x + s * (end - TOP), end);
      if (end !== y) {
        line(parent, cls, x + s * (y - 3 - TOP), y - 3, x + s * (y - TOP), y);
      }
    }
  }
}

drawGrid(document.getElementById("grid"), "");
drawGrid(document.getElementById("faceGrid"), " on-face");
line(document.getElementById("grid"), "edge", 0, EDGE, 1916, EDGE + 1916 * SLOPE);
```
